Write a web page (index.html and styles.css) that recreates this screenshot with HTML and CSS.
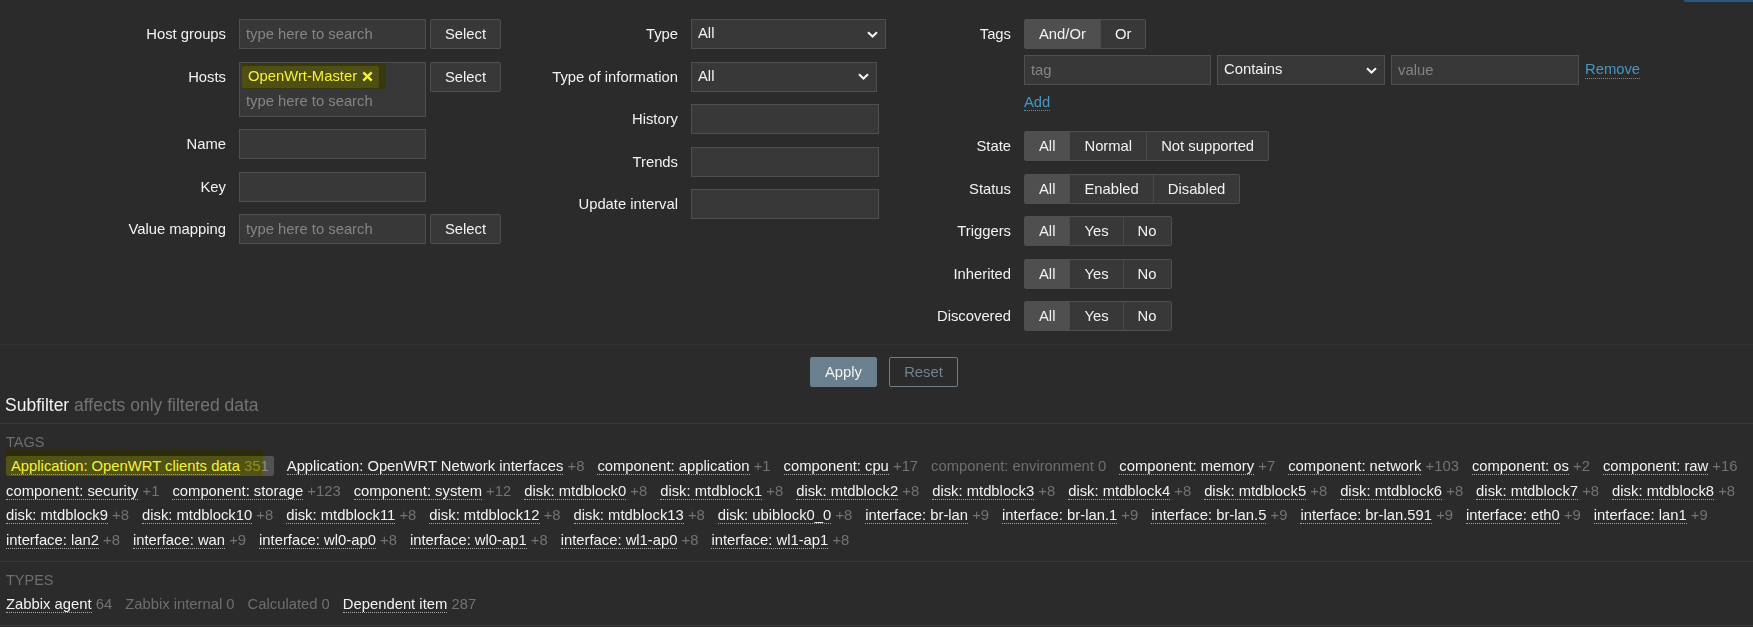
FILE: index.html
```html
<!DOCTYPE html>
<html lang="en">
<head>
<meta charset="utf-8">
<title>Items filter</title>
<link rel="stylesheet" href="styles.css">
</head>
<body>
<div class="top-strip"><div class="top-strip-btn"></div></div>

<form class="filter">
  <div class="filter-cols">
    <div class="form-col col1">
      <label class="lbl">Host groups</label>
      <div class="ctrl-pair">
        <input class="input w187" placeholder="type here to search">
        <button type="button" class="btn-grey">Select</button>
      </div>

      <label class="lbl">Hosts</label>
      <div class="ctrl-pair">
        <div class="multiselect">
          <span class="ms-chip hl">OpenWrt-Master<svg class="chip-x" width="11" height="11" viewBox="0 0 11 11"><path d="M1.3 1.3L9.7 9.7M9.7 1.3L1.3 9.7" fill="none" stroke="currentColor" stroke-width="2.4"/></svg></span>
          <span class="ms-placeholder">type here to search</span>
        </div>
        <button type="button" class="btn-grey">Select</button>
      </div>

      <label class="lbl">Name</label>
      <input class="input w187">

      <label class="lbl">Key</label>
      <input class="input w187">

      <label class="lbl">Value mapping</label>
      <div class="ctrl-pair">
        <input class="input w187" placeholder="type here to search">
        <button type="button" class="btn-grey">Select</button>
      </div>
    </div>

    <div class="form-col col2">
      <label class="lbl">Type</label>
      <div class="select w195"><span>All</span><svg class="chev" width="11" height="7" viewBox="0 0 11 7"><path d="M1 1.2L5.5 5.5L10 1.2" fill="none" stroke="#f2f2f2" stroke-width="2.1"/></svg></div>

      <label class="lbl">Type of information</label>
      <div class="select w186"><span>All</span><svg class="chev" width="11" height="7" viewBox="0 0 11 7"><path d="M1 1.2L5.5 5.5L10 1.2" fill="none" stroke="#f2f2f2" stroke-width="2.1"/></svg></div>

      <label class="lbl">History</label>
      <input class="input w188">

      <label class="lbl">Trends</label>
      <input class="input w188">

      <label class="lbl">Update interval</label>
      <input class="input w188">
    </div>

    <div class="form-col col3">
      <label class="lbl">Tags</label>
      <div class="tags-block">
        <div class="radio"><span class="on">And/Or</span><span>Or</span></div>
        <div class="tag-row">
          <input class="input w187" placeholder="tag">
          <div class="select w168"><span>Contains</span><svg class="chev" width="11" height="7" viewBox="0 0 11 7"><path d="M1 1.2L5.5 5.5L10 1.2" fill="none" stroke="#f2f2f2" stroke-width="2.1"/></svg></div>
          <input class="input w188" placeholder="value">
          <a class="link" href="#">Remove</a>
        </div>
        <div class="tag-add"><a class="link" href="#">Add</a></div>
      </div>

      <label class="lbl">State</label>
      <div class="radio"><span class="on">All</span><span>Normal</span><span>Not supported</span></div>

      <label class="lbl">Status</label>
      <div class="radio"><span class="on">All</span><span>Enabled</span><span>Disabled</span></div>

      <label class="lbl">Triggers</label>
      <div class="radio"><span class="on">All</span><span>Yes</span><span>No</span></div>

      <label class="lbl">Inherited</label>
      <div class="radio"><span class="on">All</span><span>Yes</span><span>No</span></div>

      <label class="lbl">Discovered</label>
      <div class="radio"><span class="on">All</span><span>Yes</span><span>No</span></div>
    </div>
  </div>

  <div class="filter-actions">
    <button type="button" class="btn-apply">Apply</button>
    <button type="button" class="btn-reset">Reset</button>
  </div>
</form>

<div class="subfilter-head">Subfilter <span class="muted">affects only filtered data</span></div>

<section class="sf-section">
  <div class="sf-title">Tags</div>
  <div class="sf-list">
    <span class="sf-item sf-enabled hl-tag"><span class="sf-name">Application: OpenWRT clients data</span> <span class="sf-count">351</span></span>
    <span class="sf-item"><a class="sf-name" href="#">Application: OpenWRT Network interfaces</a> <span class="sf-count">+8</span></span>
    <span class="sf-item"><a class="sf-name" href="#">component: application</a> <span class="sf-count">+1</span></span>
    <span class="sf-item"><a class="sf-name" href="#">component: cpu</a> <span class="sf-count">+17</span></span>
    <span class="sf-item sf-disabled">component: environment 0</span>
    <span class="sf-item"><a class="sf-name" href="#">component: memory</a> <span class="sf-count">+7</span></span>
    <span class="sf-item"><a class="sf-name" href="#">component: network</a> <span class="sf-count">+103</span></span>
    <span class="sf-item"><a class="sf-name" href="#">component: os</a> <span class="sf-count">+2</span></span>
    <span class="sf-item"><a class="sf-name" href="#">component: raw</a> <span class="sf-count">+16</span></span>
    <span class="sf-item"><a class="sf-name" href="#">component: security</a> <span class="sf-count">+1</span></span>
    <span class="sf-item"><a class="sf-name" href="#">component: storage</a> <span class="sf-count">+123</span></span>
    <span class="sf-item"><a class="sf-name" href="#">component: system</a> <span class="sf-count">+12</span></span>
    <span class="sf-item"><a class="sf-name" href="#">disk: mtdblock0</a> <span class="sf-count">+8</span></span>
    <span class="sf-item"><a class="sf-name" href="#">disk: mtdblock1</a> <span class="sf-count">+8</span></span>
    <span class="sf-item"><a class="sf-name" href="#">disk: mtdblock2</a> <span class="sf-count">+8</span></span>
    <span class="sf-item"><a class="sf-name" href="#">disk: mtdblock3</a> <span class="sf-count">+8</span></span>
    <span class="sf-item"><a class="sf-name" href="#">disk: mtdblock4</a> <span class="sf-count">+8</span></span>
    <span class="sf-item"><a class="sf-name" href="#">disk: mtdblock5</a> <span class="sf-count">+8</span></span>
    <span class="sf-item"><a class="sf-name" href="#">disk: mtdblock6</a> <span class="sf-count">+8</span></span>
    <span class="sf-item"><a class="sf-name" href="#">disk: mtdblock7</a> <span class="sf-count">+8</span></span>
    <span class="sf-item"><a class="sf-name" href="#">disk: mtdblock8</a> <span class="sf-count">+8</span></span>
    <span class="sf-item"><a class="sf-name" href="#">disk: mtdblock9</a> <span class="sf-count">+8</span></span>
    <span class="sf-item"><a class="sf-name" href="#">disk: mtdblock10</a> <span class="sf-count">+8</span></span>
    <span class="sf-item"><a class="sf-name" href="#">disk: mtdblock11</a> <span class="sf-count">+8</span></span>
    <span class="sf-item"><a class="sf-name" href="#">disk: mtdblock12</a> <span class="sf-count">+8</span></span>
    <span class="sf-item"><a class="sf-name" href="#">disk: mtdblock13</a> <span class="sf-count">+8</span></span>
    <span class="sf-item"><a class="sf-name" href="#">disk: ubiblock0_0</a> <span class="sf-count">+8</span></span>
    <span class="sf-item"><a class="sf-name" href="#">interface: br-lan</a> <span class="sf-count">+9</span></span>
    <span class="sf-item"><a class="sf-name" href="#">interface: br-lan.1</a> <span class="sf-count">+9</span></span>
    <span class="sf-item"><a class="sf-name" href="#">interface: br-lan.5</a> <span class="sf-count">+9</span></span>
    <span class="sf-item"><a class="sf-name" href="#">interface: br-lan.591</a> <span class="sf-count">+9</span></span>
    <span class="sf-item"><a class="sf-name" href="#">interface: eth0</a> <span class="sf-count">+9</span></span>
    <span class="sf-item"><a class="sf-name" href="#">interface: lan1</a> <span class="sf-count">+9</span></span>
    <span class="sf-item"><a class="sf-name" href="#">interface: lan2</a> <span class="sf-count">+8</span></span>
    <span class="sf-item"><a class="sf-name" href="#">interface: wan</a> <span class="sf-count">+9</span></span>
    <span class="sf-item"><a class="sf-name" href="#">interface: wl0-ap0</a> <span class="sf-count">+8</span></span>
    <span class="sf-item"><a class="sf-name" href="#">interface: wl0-ap1</a> <span class="sf-count">+8</span></span>
    <span class="sf-item"><a class="sf-name" href="#">interface: wl1-ap0</a> <span class="sf-count">+8</span></span>
    <span class="sf-item"><a class="sf-name" href="#">interface: wl1-ap1</a> <span class="sf-count">+8</span></span>
  </div>
</section>

<section class="sf-section">
  <div class="sf-title">Types</div>
  <div class="sf-list">
    <span class="sf-item"><a class="sf-name" href="#">Zabbix agent</a> <span class="sf-count">64</span></span>
    <span class="sf-item sf-disabled">Zabbix internal 0</span>
    <span class="sf-item sf-disabled">Calculated 0</span>
    <span class="sf-item"><a class="sf-name" href="#">Dependent item</a> <span class="sf-count">287</span></span>
  </div>
</section>
</body>
</html>
```

FILE: styles.css
```css
html, body {
  margin: 0;
  background: #2b2b2b;
}

body {
  color: #f2f2f2;
  font-family: "Liberation Sans", Arial, sans-serif;
  font-size: 14.8px;
  line-height: 1.2;
  overflow: hidden;
}

/* cut-off header control above the filter */
.top-strip {
  height: 2px;
  display: flex;
  justify-content: flex-end;
}
.top-strip-btn {
  width: 69px;
  background: #2a5780;
}

/* ---------- filter form ---------- */
.filter-cols {
  display: flex;
  padding: 17px 0 13px;
}

.form-col {
  display: grid;
  grid-template-columns: var(--lw) max-content;
  column-gap: 13px;
  row-gap: 12.5px;
  align-content: start;
  align-items: start;
  justify-items: start;
}
.col1 { width: 520px; --lw: 226px; }
.col2 { width: 380px; --lw: 158px; }
.col3 { flex: 1; --lw: 111px; }

.lbl {
  justify-self: end;
  text-align: right;
  line-height: 30px;
  white-space: nowrap;
}

.ctrl-pair {
  display: flex;
  align-items: flex-start;
  gap: 4px;
}

.input {
  box-sizing: border-box;
  height: 30px;
  margin: 0;
  padding: 0 6px;
  background: #383838;
  border: 1px solid #4f4f4f;
  border-radius: 0;
  color: #f2f2f2;
  font: inherit;
  outline: none;
}
.input::placeholder { color: #858585; }

.w186 { width: 186px; }
.w187 { width: 187px; }
.w188 { width: 188px; }
.w195 { width: 195px; }
.w168 { width: 168px; }

.btn-grey {
  box-sizing: border-box;
  width: 71px;
  height: 30px;
  margin: 0;
  padding: 0;
  background: #383838;
  border: 1px solid #4f4f4f;
  border-radius: 2px;
  color: #f2f2f2;
  font: inherit;
  line-height: 28px;
}

.select {
  box-sizing: border-box;
  height: 30px;
  display: flex;
  align-items: center;
  justify-content: space-between;
  padding: 0 7px 0 6px;
  background: #383838;
  border: 1px solid #4f4f4f;
}
.chev { display: block; }

/* multiselect with a selected host */
.multiselect {
  box-sizing: border-box;
  width: 187px;
  height: 55px;
  padding: 3px 2px;
  background: #383838;
  border: 1px solid #4f4f4f;
  display: flex;
  flex-direction: column;
  align-items: flex-start;
  gap: 2px;
}
.ms-chip {
  position: relative;
  display: inline-flex;
  align-items: center;
  gap: 5px;
  height: 22px;
  padding: 0 6px 0 6px;
  background: #4f4f4f;
  border-radius: 2px;
  white-space: nowrap;
}
.chip-x { display: block; }
.ms-placeholder {
  line-height: 22px;
  padding-left: 4px;
  color: #858585;
}

/* yellow marker highlight painted over the selection */
.hl::after,
.hl-tag::after {
  content: "";
  position: absolute;
  background: #ffff40;
  mix-blend-mode: multiply;
  pointer-events: none;
}
.hl::after { left: 0; top: -3px; right: -7px; bottom: -1px; }
.hl-tag::after { left: 0; top: -6px; right: 11px; bottom: 0; }

/* radio button groups */
.radio {
  box-sizing: border-box;
  display: inline-flex;
  height: 30px;
  border: 1px solid #4f4f4f;
  border-radius: 2px;
  overflow: hidden;
}
.radio span {
  padding: 0 14px;
  line-height: 28px;
  background: #383838;
  border-left: 1px solid #4a4a4a;
  white-space: nowrap;
}
.radio span:first-child { border-left: 0; }
.radio span.on { background: #4f4f4f; }

/* tags block */
.tags-block {
  display: flex;
  flex-direction: column;
  align-items: flex-start;
}
.tag-row {
  display: flex;
  align-items: center;
  gap: 6px;
  margin-top: 6px;
}
.tag-add {
  margin-top: 8px;
  line-height: 18px;
  padding-bottom: 7.5px;
}

.link {
  color: #4796c4;
  text-decoration: none;
  border-bottom: 1px dotted #4796c4;
}

/* apply / reset */
.filter-actions {
  display: flex;
  justify-content: center;
  gap: 12px;
  padding: 12px 0 0 15px;
  border-top: 1px solid #333333;
}
.btn-apply,
.btn-reset {
  box-sizing: border-box;
  height: 30px;
  margin: 0;
  padding: 0;
  border-radius: 2px;
  font: inherit;
  line-height: 28px;
}
.btn-apply {
  width: 67px;
  background: #6b808f;
  border: 1px solid #6b808f;
  color: #f2f2f2;
}
.btn-reset {
  width: 69px;
  background: transparent;
  border: 1px solid #6b808f;
  color: #70858f;
}

/* ---------- subfilter ---------- */
.subfilter-head {
  margin-top: 6px;
  padding: 0 5px 6px;
  font-size: 17.5px;
  line-height: 24px;
  border-bottom: 1px solid #383838;
}
.muted { color: #737373; }

.sf-section {
  padding: 9px 6px 11px;
  border-bottom: 1px solid #383838;
}
.sf-title {
  font-size: 14.5px;
  line-height: 18px;
  color: #6e6e6e;
  text-transform: uppercase;
  margin-bottom: 5px;
}
.sf-list {
  display: flex;
  flex-wrap: wrap;
  column-gap: 13px;
  row-gap: 4.7px;
}
.sf-item {
  line-height: 20px;
  white-space: nowrap;
}
.sf-name {
  color: #f2f2f2;
  text-decoration: none;
  border-bottom: 1px dotted #a8a8a8;
}
.sf-count { color: #737373; }
.sf-disabled { color: #6e6e6e; }

.sf-enabled {
  position: relative;
  padding: 0 5px;
  background: #525252;
  border-radius: 2px;
}
.sf-enabled .sf-count { color: #8c8c8c; }
```
